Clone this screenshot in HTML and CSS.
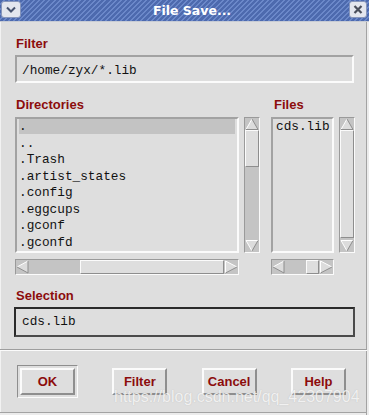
FILE: index.html
```html
<!DOCTYPE html>
<html>
<head>
<meta charset="utf-8">
<link rel="stylesheet" href="styles.css">
</head>
<body>
<div class="window">
  <div class="titlebar">
    <div class="tb-btn">
      <svg width="18" height="15" viewBox="0 0 18 15"><polyline points="5,5.5 9,9.5 13,5.5" fill="none" stroke="#46526e" stroke-width="2"/></svg>
    </div>
    <div class="title">File Save...</div>
    <div class="tb-btn">
      <svg width="16" height="15" viewBox="0 0 16 15"><path d="M4.5 4 L11.5 11 M11.5 4 L4.5 11" stroke="#4a4f5c" stroke-width="2.2"/></svg>
    </div>
  </div>

  <div class="content">
    <div class="label">Filter</div>
    <div class="field">/home/zyx/*.lib</div>

    <div class="lists">
      <div class="dircol">
        <div class="label">Directories</div>
        <div class="listrow">
          <div class="list dirs">
            <div class="item sel">.</div>
            <div class="item">..</div>
            <div class="item">.Trash</div>
            <div class="item">.artist_states</div>
            <div class="item">.config</div>
            <div class="item">.eggcups</div>
            <div class="item">.gconf</div>
            <div class="item">.gconfd</div>
          </div>
          <div class="vscroll">
            <svg class="arr-v" width="14" height="12" viewBox="0 0 14 12"><polygon points="7,1 13,11.5 1,11.5" fill="#dcdcdc"/><polyline points="1,11.5 7,1" fill="none" stroke="#fff"/><polyline points="7,1 13,11.5 1,11.5" fill="none" stroke="#8e8e8e"/></svg>
            <div class="thumb" style="height:37px"></div>
            <div class="trough"></div>
            <svg class="arr-v" width="14" height="13" viewBox="0 0 14 13"><polygon points="1,1.5 13,1.5 7,12" fill="#dcdcdc"/><polyline points="7,12 1,1.5 13,1.5" fill="none" stroke="#fff"/><polyline points="13,1.5 7,12" fill="none" stroke="#8e8e8e"/></svg>
          </div>
        </div>
        <div class="hscroll dirs-h">
          <svg class="arr-h" width="13" height="14" viewBox="0 0 13 14"><polygon points="1,7 12,1 12,13" fill="#dcdcdc"/><polyline points="1,7 12,1" fill="none" stroke="#fff"/><polyline points="12,1 12,13 1,7" fill="none" stroke="#8e8e8e"/></svg>
          <div class="trough" style="width:51px"></div>
          <div class="thumb"></div>
          <svg class="arr-h" width="14" height="14" viewBox="0 0 14 14"><polygon points="1.5,1 13,7 1.5,13" fill="#dcdcdc"/><polyline points="1.5,13 1.5,1 13,7" fill="none" stroke="#fff"/><polyline points="13,7 1.5,13" fill="none" stroke="#8e8e8e"/></svg>
        </div>
      </div>

      <div class="filecol">
        <div class="label files-label">Files</div>
        <div class="listrow">
          <div class="list files">
            <div class="item">cds.lib</div>
          </div>
          <div class="vscroll">
            <svg class="arr-v" width="14" height="12" viewBox="0 0 14 12"><polygon points="7,1 13,11.5 1,11.5" fill="#dcdcdc"/><polyline points="1,11.5 7,1" fill="none" stroke="#fff"/><polyline points="7,1 13,11.5 1,11.5" fill="none" stroke="#8e8e8e"/></svg>
            <div class="thumb"></div>
            <div class="trough" style="height:1px;flex:none"></div>
            <svg class="arr-v" width="14" height="13" viewBox="0 0 14 13"><polygon points="1,1.5 13,1.5 7,12" fill="#dcdcdc"/><polyline points="7,12 1,1.5 13,1.5" fill="none" stroke="#fff"/><polyline points="13,1.5 7,12" fill="none" stroke="#8e8e8e"/></svg>
          </div>
        </div>
        <div class="hscroll files-h">
          <svg class="arr-h" width="13" height="14" viewBox="0 0 13 14"><polygon points="1,7 12,1 12,13" fill="#dcdcdc"/><polyline points="1,7 12,1" fill="none" stroke="#fff"/><polyline points="12,1 12,13 1,7" fill="none" stroke="#8e8e8e"/></svg>
          <div class="trough"></div>
          <div class="thumb" style="flex:none;width:13px"></div>
          <svg class="arr-h" width="14" height="14" viewBox="0 0 14 14"><polygon points="1.5,1 13,7 1.5,13" fill="#dcdcdc"/><polyline points="1.5,13 1.5,1 13,7" fill="none" stroke="#fff"/><polyline points="13,7 1.5,13" fill="none" stroke="#8e8e8e"/></svg>
        </div>
      </div>
    </div>

    <div class="label sel-label">Selection</div>
    <div class="field focus">cds.lib</div>
  </div>

  <div class="sep"></div>

  <div class="buttons">
    <div class="default-frame"><div class="btn">OK</div></div>
    <div class="btn">Filter</div>
    <div class="btn">Cancel</div>
    <div class="btn">Help</div>
  </div>

  <div class="watermark">https://blog.csdn.net/qq_42307904</div>
</div>
</body>
</html>
```

FILE: styles.css
```css
* { box-sizing: border-box; }
html, body { margin: 0; padding: 0; }
body {
  width: 369px;
  height: 415px;
  overflow: hidden;
  background: #dedede;
  font-family: "Liberation Sans", Arial, sans-serif;
}
.window {
  position: relative;
  width: 369px;
  height: 415px;
  display: flex;
  flex-direction: column;
  background: #dedede;
  box-shadow: inset -2px 0 0 #ececec, inset -3px 0 0 #a3a3a3, inset 0 -2px 0 #ececec, inset 0 -3px 0 #a3a3a3, inset 1px 0 0 #f2f2f2;
}

/* title bar */
.titlebar {
  height: 22px;
  flex: none;
  display: flex;
  align-items: flex-start;
  padding: 1px 2px 0 1px;
  background: repeating-linear-gradient(135deg, #4d6aae 0px, #4d6aae 2.2px, #6b88c9 2.2px, #6b88c9 3.6px);
  border-bottom: 1px solid #c8ccd4;
}
.tb-btn {
  flex: none;
  width: 20px;
  height: 17px;
  border: 1px solid #8796bb;
  border-radius: 3px;
  background: #e3e6ee;
  display: flex;
  align-items: center;
  justify-content: center;
}
.tb-btn:last-child { width: 18px; }
.title {
  flex: 1;
  text-align: center;
  padding-left: 14px;
  color: #fff;
  font-family: "DejaVu Sans", sans-serif;
  font-weight: bold;
  font-size: 12.5px;
  line-height: 19px;
}

/* content */
.content {
  flex: none;
  padding: 0 14px 0 15px;
  display: flex;
  flex-direction: column;
}
.label {
  color: #8c0c0c;
  font-weight: bold;
  font-size: 13px;
  line-height: 16px;
  height: 16px;
  padding-left: 1px;
  margin-bottom: 3px;
}
.content > .label:first-child { margin-top: 14px; }
.files-label { padding-left: 3px; }
.sel-label { margin-top: 13px; }

.field {
  height: 28px;
  width: 339px;
  border: 2px solid;
  border-color: #a2a2a2 #fbfbfb #fbfbfb #a2a2a2;
  font-family: "Liberation Mono", "Courier New", monospace;
  font-size: 12.75px;
  line-height: 21px;
  padding: 3px 5px 0;
  color: #111;
}
.field.focus {
  height: 30px;
  width: 341px;
  margin-left: -1px;
  border: 2px solid;
  border-color: #2a2a2a #4a4a4a #4a4a4a #2a2a2a;
  line-height: 26px;
  padding: 0 6px;
}

.lists {
  display: flex;
  gap: 11px;
  margin-top: 14px;
}
.dircol { width: 245px; flex: none; }
.filecol { width: 84px; flex: none; }
.listrow {
  display: flex;
  gap: 5px;
  height: 136px;
  margin-top: 4px;
}
.list {
  height: 136px;
  border: 2px solid;
  border-color: #a2a2a2 #fbfbfb #fbfbfb #a2a2a2;
  padding: 0 2px;
  font-family: "Liberation Mono", "Courier New", monospace;
  font-size: 12.75px;
  color: #111;
  overflow: hidden;
}
.list.dirs { width: 224px; }
.list.files { width: 63px; padding-left: 3px; }
.item {
  height: 16.5px;
  line-height: 16.5px;
  white-space: pre;
}
.item.sel { background: #c3c3c3; height: 15px; line-height: 16px; margin-bottom: 1.5px; }

/* scrollbars */
.vscroll {
  width: 16px;
  height: 136px;
  flex: none;
  border: 1px solid;
  border-color: #9a9a9a #fbfbfb #fbfbfb #9a9a9a;
  background: #c4c4c4;
  display: flex;
  flex-direction: column;
  align-items: stretch;
}
.arr-v { display: block; flex: none; }
.arr-h { display: block; flex: none; }
.thumb {
  flex: 1;
  background: #dedede;
  border: 1px solid;
  border-color: #fbfbfb #8e8e8e #8e8e8e #fbfbfb;
}
.vscroll .thumb { flex: none; }
.vscroll .trough { flex: 1; }
.filecol .vscroll .thumb { flex: 1; }
.hscroll {
  height: 16px;
  margin-top: 6px;
  border: 1px solid;
  border-color: #9a9a9a #fbfbfb #fbfbfb #9a9a9a;
  background: #c4c4c4;
  display: flex;
  align-items: stretch;
}
.dirs-h { width: 224px; }
.dirs-h .trough { flex: none; }
.files-h { width: 63px; }
.files-h .trough { flex: 1; }

/* separator */
.sep {
  flex: none;
  height: 2px;
  margin-top: 12px;
  border-top: 1px solid #9e9e9e;
  border-bottom: 1px solid #fbfbfb;
  margin-right: 2px;
}

/* buttons */
.buttons {
  flex: none;
  display: flex;
  align-items: center;
  justify-content: space-between;
  padding: 0 23px 0 17px;
  margin-top: 14px;
  height: 33px;
}
.default-frame {
  width: 61px;
  height: 33px;
  border: 1px solid;
  border-color: #8e8e8e #fbfbfb #fbfbfb #8e8e8e;
  padding: 2px 2px;
  display: flex;
}
.btn {
  width: 55px;
  height: 27px;
  border: 2px solid;
  border-color: #fbfbfb #8e8e8e #8e8e8e #fbfbfb;
  background: #dedede;
  color: #8c0c0c;
  font-weight: bold;
  font-size: 13px;
  line-height: 23px;
  text-align: center;
}
.default-frame .btn { width: 100%; height: 100%; line-height: 23px; }

/* watermark overlay */
.watermark {
  position: absolute;
  left: 114px;
  top: 388px;
  font-family: "Liberation Sans", Arial, sans-serif;
  font-size: 16px;
  line-height: 18px;
  color: rgba(255, 255, 255, 0.78);
  text-shadow: 0 0 1px rgba(150, 150, 150, 0.5);
  white-space: nowrap;
}
```
